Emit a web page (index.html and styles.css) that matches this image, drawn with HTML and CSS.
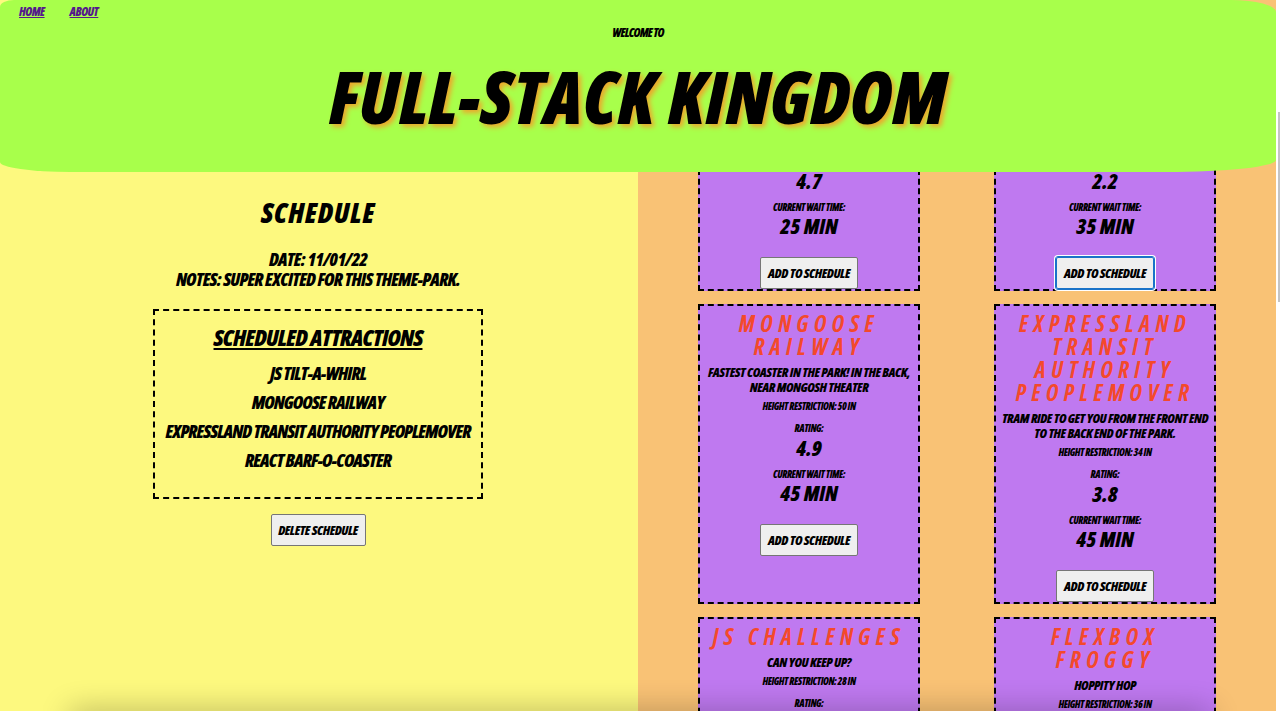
FILE: index.html
```html
<!DOCTYPE html>
<html lang="en">
<head>
    <meta charset="UTF-8">
    <meta name="viewport" content="width=device-width, initial-scale=1.0">
    <title>Full-Stack Kingdom</title>
    <link rel="stylesheet" href="styles.css">
</head>
<body>

<header class="site-header">
    <nav class="site-nav">
        <a href="#">HOME</a>
        <a href="#">ABOUT</a>
    </nav>
    <p class="welcome">WELCOME TO</p>
    <h1 class="park-title">FULL-STACK KINGDOM</h1>
</header>

<main class="page">
    <section class="schedule">
        <h2 class="schedule-title">SCHEDULE</h2>
        <p class="schedule-info">DATE: 11/01/22<br>NOTES: SUPER EXCITED FOR THIS THEME-PARK.</p>
        <div class="scheduled-box">
            <h3 class="scheduled-title">SCHEDULED ATTRACTIONS</h3>
            <p class="scheduled-item">JS TILT-A-WHIRL</p>
            <p class="scheduled-item">MONGOOSE RAILWAY</p>
            <p class="scheduled-item">EXPRESSLAND TRANSIT AUTHORITY PEOPLEMOVER</p>
            <p class="scheduled-item">REACT BARF-O-COASTER</p>
        </div>
        <button class="delete-btn" type="button">DELETE SCHEDULE</button>
    </section>

    <section class="attractions">
        <div class="attraction-grid">
            <article class="card card-cut">
                <p class="stat">4.7</p>
                <p class="label wait-label">CURRENT WAIT TIME:</p>
                <p class="stat">25 MIN</p>
                <button class="add-btn" type="button">ADD TO SCHEDULE</button>
            </article>
            <article class="card card-cut">
                <p class="stat">2.2</p>
                <p class="label wait-label">CURRENT WAIT TIME:</p>
                <p class="stat">35 MIN</p>
                <button class="add-btn add-btn-focus" type="button">ADD TO SCHEDULE</button>
            </article>

            <article class="card">
                <h3 class="card-name">MONGOOSE RAILWAY</h3>
                <p class="card-desc">FASTEST COASTER IN THE PARK! IN THE BACK, NEAR MONGOSH THEATER</p>
                <p class="label">HEIGHT RESTRICTION: 50 IN</p>
                <p class="label rating-label">RATING:</p>
                <p class="stat">4.9</p>
                <p class="label wait-label">CURRENT WAIT TIME:</p>
                <p class="stat">45 MIN</p>
                <button class="add-btn" type="button">ADD TO SCHEDULE</button>
            </article>
            <article class="card">
                <h3 class="card-name">EXPRESSLAND TRANSIT AUTHORITY PEOPLEMOVER</h3>
                <p class="card-desc">TRAM RIDE TO GET YOU FROM THE FRONT END TO THE BACK END OF THE PARK.</p>
                <p class="label">HEIGHT RESTRICTION: 34 IN</p>
                <p class="label rating-label">RATING:</p>
                <p class="stat">3.8</p>
                <p class="label wait-label">CURRENT WAIT TIME:</p>
                <p class="stat">45 MIN</p>
                <button class="add-btn" type="button">ADD TO SCHEDULE</button>
            </article>

            <article class="card">
                <h3 class="card-name">JS CHALLENGES</h3>
                <p class="card-desc">CAN YOU KEEP UP?</p>
                <p class="label">HEIGHT RESTRICTION: 28 IN</p>
                <p class="label rating-label">RATING:</p>
            </article>
            <article class="card">
                <h3 class="card-name">FLEXBOX FROGGY</h3>
                <p class="card-desc">HOPPITY HOP</p>
                <p class="label">HEIGHT RESTRICTION: 36 IN</p>
                <p class="label rating-label">RATING:</p>
            </article>
        </div>
    </section>

    <div class="scrollbar"><div class="scrollbar-thumb"></div></div>
</main>

<div class="bottom-shade"></div>

</body>
</html>
```

FILE: styles.css
```css
/* Full-Stack Kingdom */
html,
body {
    height: 100%;
}

body {
    position: relative;
    margin: 0;
    overflow: hidden;
    font-family: "Open Sans", sans-serif;
    font-stretch: 75%;
    font-style: italic;
    font-weight: 800;
    color: #000;
    text-align: center;
}

p,
h1,
h2,
h3 {
    margin: 0;
    font-weight: 800;
}

.site-header {
    position: absolute;
    top: 0;
    left: 0;
    right: 4px;
    z-index: 2;
    height: 172px;
    background-color: #a8ff4b;
    border-radius: 14px 45px 110px 70px / 7px 12px 12px 10px;
}

.site-nav {
    display: flex;
    gap: 25px;
    padding: 4px 0 0 19px;
    font-size: 12px;
    line-height: 15px;
    letter-spacing: -0.5px;
}

.site-nav a {
    color: #551a8b;
}

.welcome {
    margin-top: 7px;
    font-size: 12px;
    line-height: 14px;
    letter-spacing: -0.8px;
}

.park-title {
    margin-top: 17px;
    font-size: 73px;
    line-height: 78px;
    letter-spacing: 0.2px;
    text-shadow: 3px 3px 5px #eda72c;
}

.page {
    display: flex;
    height: 100%;
}

.schedule {
    flex: 0 0 638px;
    padding: 195px 2px 0 0;
    box-sizing: border-box;
    background-color: #fdf97f;
}

.schedule-title {
    font-size: 28px;
    line-height: 34px;
    letter-spacing: 1px;
}

.schedule-info {
    margin-top: 20px;
    font-size: 18px;
    line-height: 20px;
    letter-spacing: -0.7px;
}

.scheduled-box {
    width: 330px;
    height: 190px;
    margin: 20px auto 15px;
    padding-top: 11px;
    box-sizing: border-box;
    border: 2px dashed #000;
}

.scheduled-title {
    margin-bottom: 7px;
    font-size: 23px;
    line-height: 30px;
    letter-spacing: -0.7px;
    text-decoration: underline;
}

.scheduled-item {
    font-size: 18px;
    line-height: 29px;
    letter-spacing: -0.85px;
}

.delete-btn,
.add-btn {
    height: 32px;
    padding: 0;
    font-family: inherit;
    font-stretch: 75%;
    font-style: italic;
    font-weight: 800;
    font-size: 13px;
    letter-spacing: -0.4px;
    color: #000;
    background-color: #efefef;
    border: 1px solid #767676;
    border-radius: 2px;
}

.delete-btn {
    width: 95px;
}

.attractions {
    flex: 1;
    overflow: hidden;
    background-color: #f9c275;
}

.attraction-grid {
    display: grid;
    grid-template-columns: 222px 222px;
    justify-content: center;
    column-gap: 74px;
    row-gap: 13px;
    padding-top: 140px;
}

.card {
    padding: 6px 2px 0;
    box-sizing: border-box;
    background-color: #bf79f0;
    border: 2px dashed #000;
}

/* top of these two is under the header */
.card-cut {
    height: 151px;
    padding-top: 25px;
}

.card-name {
    margin-bottom: 7px;
    padding: 0 10px;
    font-size: 23px;
    line-height: 23px;
    font-weight: 700;
    letter-spacing: 5.5px;
    color: #f4492b;
}

.card-desc {
    margin-bottom: 5px;
    font-size: 13px;
    line-height: 15px;
    letter-spacing: -0.4px;
}

.label {
    font-size: 10px;
    line-height: 13px;
    letter-spacing: -0.4px;
}

.rating-label {
    margin: 9px 0 -1px;
}

.wait-label {
    margin: 6px 0 -2px;
}

.stat {
    font-size: 21px;
    line-height: 28px;
}

.add-btn {
    width: 98px;
    margin-top: 17px;
}

.add-btn-focus {
    border-color: #1a73c8;
    outline: 1px solid #1a73c8;
    box-shadow: 0 0 0 2px #fff;
}

.scrollbar {
    flex: 0 0 4px;
    padding-top: 112px;
    box-sizing: border-box;
    background-color: #fff;
}

.scrollbar-thumb {
    width: 2px;
    height: 190px;
    margin-left: 2px;
    background-color: #c4c4c4;
}

.bottom-shade {
    position: absolute;
    left: 70px;
    right: 70px;
    bottom: -20px;
    height: 20px;
    box-shadow: 0 0 30px rgba(0, 0, 0, 0.3);
}
```
